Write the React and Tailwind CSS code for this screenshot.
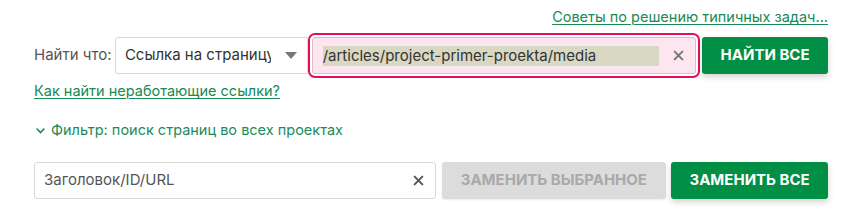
import React from 'react';

const font = { fontFamily: 'Inter, "Noto Sans", sans-serif' };

function Cross({ className }) {
  return (
    <svg viewBox="0 0 10 10" className={className} fill="none" stroke="currentColor" strokeWidth="1.8" strokeLinecap="round">
      <path d="M1.5 1.5 L8.5 8.5 M8.5 1.5 L1.5 8.5" />
    </svg>
  );
}

export default function App() {
  return (
    <div className="w-[865px] h-[218px] bg-white pl-[34px] pr-[37px] pt-[7px] text-[14px]" style={font}>
      {/* top link */}
      <div className="h-5 flex justify-end items-center">
        <a className="text-[#178a55] underline underline-offset-2 decoration-1 text-[14.5px] leading-5 cursor-pointer">
          Советы по решению типичных задач...
        </a>
      </div>

      {/* search row */}
      <div className="mt-[10px] h-[37px] flex items-center">
        <span className="w-[81px] text-[#555] text-[15px]">Найти что:</span>
        <div className="w-[193px] h-[37px] border border-[#d9d9d9] rounded-l-[3px] flex items-center pl-[9px] pr-[10px] bg-white">
          <span className="w-[146px] overflow-hidden whitespace-nowrap text-[15px] text-[#333]">Ссылка на страницу</span>
          <span className="ml-auto w-0 h-0 border-l-[6px] border-r-[6px] border-t-[7px] border-l-transparent border-r-transparent border-t-[#777]"></span>
        </div>
        <div className="ml-[4px] w-[385px] h-[37px] border border-[#e3b9c9] rounded-[3px] bg-[#fde6ef] outline-2 outline-offset-[2px] outline-[#e2105b] flex items-center pl-[10px] pr-[11px]">
          <span className="bg-[#d9d8c2] text-[15px] text-[#333] leading-5 w-[336px] whitespace-nowrap">/articles/project-primer-proekta/media</span>
          <Cross className="ml-auto w-[11px] h-[11px] text-[#777]" />
        </div>
        <button className="ml-[6px] w-[126px] h-[37px] rounded-[3px] bg-[#008f45] text-white font-bold text-[15px] shadow-[0_3px_6px_rgba(0,0,0,0.18)]">
          НАЙТИ ВСЕ
        </button>
      </div>

      {/* help link */}
      <div className="mt-[7px] h-5 flex items-center">
        <a className="text-[#178a55] underline underline-offset-2 decoration-1 text-[14.5px] leading-5 cursor-pointer">
          Как найти неработающие ссылки?
        </a>
      </div>

      {/* filter */}
      <div className="mt-[19px] h-5 flex items-center gap-[5px] text-[#1b8a5c] text-[14.5px]">
        <svg viewBox="0 0 10 10" className="w-[11px] h-[11px] ml-[1px]" fill="none" stroke="currentColor" strokeWidth="1.5">
          <path d="M1.5 3.2 L5 6.8 L8.5 3.2" />
        </svg>
        <span>Фильтр: поиск страниц во всех проектах</span>
      </div>

      {/* replace row */}
      <div className="mt-[22px] h-[37px] flex items-center">
        <div className="w-[402px] h-[37px] border border-[#d9d9d9] rounded-[3px] flex items-center pl-[9px] pr-[11px]">
          <span className="text-[15px] text-[#555]">Заголовок/ID/URL</span>
          <Cross className="ml-auto w-[11px] h-[11px] text-[#555]" />
        </div>
        <button className="ml-[6px] w-[225px] h-[37px] rounded-[3px] bg-[#dcdcdc] text-[#a9a9a9] font-bold text-[15px] shadow-[0_1px_2px_rgba(0,0,0,0.08)]">
          ЗАМЕНИТЬ ВЫБРАННОЕ
        </button>
        <button className="ml-[5px] w-[157px] h-[37px] rounded-[3px] bg-[#008f45] text-white font-bold text-[15px] shadow-[0_3px_6px_rgba(0,0,0,0.18)]">
          ЗАМЕНИТЬ ВСЕ
        </button>
      </div>
    </div>
  );
}
